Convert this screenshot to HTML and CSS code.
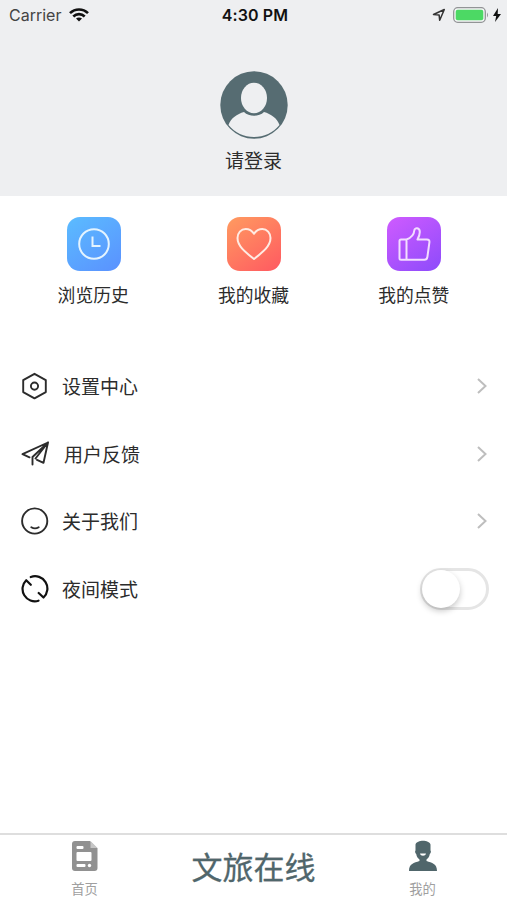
FILE: index.html
```html
<!DOCTYPE html>
<html lang="zh-CN">

<head>
  <meta charset="utf-8" />
  <title>我的</title>
  <link rel="stylesheet" href="styles.css">
</head>

<body>
  <div class="header">
    <div class="status">
      <div class="status-left">
        <span class="carrier">Carrier</span>
        <svg width="20" height="14" viewBox="0 0 20 14" fill="none" stroke="#111" stroke-width="2.6">
          <path d="M1 5.2C6 .2 14 .2 19 5.2" />
          <path d="M4.3 8.5c3.2-3.2 8.2-3.2 11.4 0" />
          <path d="M7 10.500c1.700-1.500 4.300-1.500 6 0l-3 3z" fill="#111" stroke="none" />
        </svg>
      </div>
      <span class="time">4:30 PM</span>
      <div class="status-right">
        <svg width="14" height="14" viewBox="0 0 14 14" fill="none" stroke="#333" stroke-width="1.5" stroke-linejoin="round">
          <path d="M1.500 6.500l10.800-5-4.600 10.800-.6-5.400z" />
        </svg>
        <svg width="37" height="16" viewBox="0 0 37 16">
          <rect x=".7" y=".7" width="31.600" height="14.600" rx="4" fill="#f4f5f6" stroke="#929496" stroke-width="1.3" />
          <rect x="2.700" y="2.700" width="27.600" height="10.600" rx="2" fill="#4cd964" />
          <path d="M34 5.500q2 2.500 0 5z" fill="#929496" />
        </svg>
        <svg class="bolt" width="8" height="14" viewBox="0 0 8 14">
          <path d="M5 0L0 8h3.200L2 14l6-8H4.700z" fill="#111" />
        </svg>
      </div>
    </div>
    <div class="user">
      <svg width="68" height="68" viewBox="0 0 68 68">
        <circle cx="34" cy="34" r="33.700" fill="#566c72" />
        <path d="M8.500 54C11 47 17 43 24 41c5 5 15 5 20 0 7 2 13 6 15.500 13C53 62 44 66 34 66S15 62 8.500 54z" fill="#eeeff1" />
        <ellipse cx="34" cy="27" rx="13" ry="15.200" fill="#eeeff1" />
      </svg>
      <span class="login">请登录</span>
    </div>
  </div>

  <div class="nav">
    <div class="nav-item">
      <div class="nav-icon history">
        <svg width="54" height="54" viewBox="0 0 54 54" fill="none" stroke="#e4f4ff" stroke-width="2">
          <circle cx="27" cy="27" r="14.800" />
          <path d="M25.500 19.500v9.500h8" />
        </svg>
      </div>
      <span>浏览历史</span>
    </div>
    <div class="nav-item">
      <div class="nav-icon collect">
        <svg width="54" height="54" viewBox="0 0 54 54" fill="none" stroke="#ffebe3" stroke-width="2" stroke-linejoin="round">
          <path d="M27 42C18 35 10.500 29 10.500 21c0-5 3.500-9 8.200-9 3.800 0 6.800 2.500 8.300 4.800 1.500-2.300 4.500-4.800 8.300-4.800 4.700 0 8.200 4 8.200 9C43.500 29 36 35 27 42z" />
        </svg>
      </div>
      <span>我的收藏</span>
    </div>
    <div class="nav-item">
      <div class="nav-icon like">
        <svg width="54" height="54" viewBox="0 0 54 54" fill="none" stroke="#f3ddff" stroke-width="2" stroke-linejoin="round">
          <path d="M14 22.500h5.500c4-1.500 7.500-5 7.800-9 .2-3.300 5.500-3 5.500 1.500 0 3-1.300 5.500-2.300 7.500h9.500c1.800 0 2.700 1 2.400 2.800l-2 14.500c-.3 2-1.300 3-3 3H14c-1 0-1.500-.5-1.500-1.500V24c0-1 .5-1.500 1.500-1.500zM19.500 22.500v20.300" />
        </svg>
      </div>
      <span>我的点赞</span>
    </div>
  </div>

  <div class="list">
    <div class="list-item">
      <svg class="icon" width="28" height="28" viewBox="0 0 28 28">
        <path d="M13.500 1.800l11.300 6.300v12L13.500 26.400 2.200 20.100v-12z" />
        <circle cx="13.500" cy="14.100" r="3.600" />
      </svg>
      <span class="text">设置中心</span>
      <svg class="arrow" width="12" height="18" viewBox="0 0 12 18"><path d="M2 2l7.500 7L2 16" /></svg>
    </div>
    <div class="list-item feedback">
      <svg class="icon" width="28" height="28" viewBox="0 0 28 28">
        <path d="M8.500 17.300L1.500 14.200 27 2.500l-4.500 20.300-6.500-3M27 2.500L11.500 17v7.500M27 2.500L14.500 18.500" />
      </svg>
      <span class="text">用户反馈</span>
      <svg class="arrow" width="12" height="18" viewBox="0 0 12 18"><path d="M2 2l7.500 7L2 16" /></svg>
    </div>
    <div class="list-item">
      <svg class="icon" width="28" height="28" viewBox="0 0 28 28">
        <circle cx="13.700" cy="14" r="12.600" />
        <path d="M10.300 20.200c2 1.300 5.400 1.300 7.400 0" />
      </svg>
      <span class="text">关于我们</span>
      <svg class="arrow" width="12" height="18" viewBox="0 0 12 18"><path d="M2 2l7.500 7L2 16" /></svg>
    </div>
    <div class="list-item">
      <svg class="icon night" width="28" height="28" viewBox="0 0 28 28">
        <path d="M9.800 2A12.300 12.300 0 0 1 22.500 22.500l-4.800-4.500M17.500 25.700A12.300 12.300 0 0 1 5.200 5.200l4.600 4.600" />
      </svg>
      <span class="text">夜间模式</span>
      <div class="switch"><div class="switch-dot"></div></div>
    </div>
  </div>

  <div class="tabbar">
    <div class="tab">
      <svg width="28" height="32" viewBox="0 0 28 32">
        <path d="M4 1h15l7.500 7.500V28c0 2-1 3-3 3H4c-2 0-3-1-3-3V4c0-2 1-3 3-3z" fill="#919191" />
        <path d="M19.500 1v7h7z" fill="#c6c6c6" />
        <rect x="5.500" y="6" width="7" height="3" rx="1" fill="#fff" />
        <rect x="5.500" y="12" width="15" height="9" rx="1" fill="#fff" />
        <rect x="5.500" y="24" width="9" height="3" rx="1" fill="#fff" />
        <circle cx="18.500" cy="25.500" r="1.700" fill="#fff" />
      </svg>
      <span>首页</span>
    </div>
    <div class="brand">文旅在线</div>
    <div class="tab">
      <svg width="28" height="32" viewBox="0 0 28 32">
        <path d="M6.500 4.500C8-.5 20-.5 21.500 4.500v6c.8.600.3 3-.7 3.500-.5 2.800-1.800 4.500-3.300 5.500v1.500C23 23 28 23.500 28 31H0c0-7.500 5-8 10.500-10v-1.500C9 18.500 7.700 16.800 7.200 14c-1-.5-1.500-2.900-.7-3.500z" fill="#50666b" />
        <path d="M11 13.500h6c-.5 3-5.500 3-6 0z" fill="#fff" />
      </svg>
      <span>我的</span>
    </div>
  </div>
</body>

</html>
```
FILE: styles.css
```css
body {
  display: flex;
  flex-direction: column;
  height: 900px;
  margin: 0;
  background-color: #fff;
  color: #2c2c2c;
  font-family: "Liberation Sans", "Noto Sans CJK SC", sans-serif;
}

svg {
  display: block;
  flex: none;
}

.header {
  height: 196px;
  background-color: #eeeff1;
}

.status {
  display: grid;
  grid-template-columns: 1fr auto 1fr;
  align-items: center;
  height: 30px;
  padding: 0 6px 0 9px;
  font-family: Inter, sans-serif;
  font-size: 16px;
}

.status-left {
  display: flex;
  align-items: center;
  gap: 8px;
}

.carrier {
  color: #444;
}

.time {
  color: #111;
  font-weight: 600;
  letter-spacing: 0.1px;
}

.status-right {
  display: flex;
  align-items: center;
  justify-content: flex-end;
  gap: 7px;
}

.bolt {
  margin-left: -4px;
}

.user {
  display: flex;
  flex-direction: column;
  align-items: center;
  padding-top: 41px;
}

.login {
  margin-top: 9px;
  font-size: 19px;
  line-height: 28px;
}

.nav {
  display: grid;
  grid-template-columns: repeat(3, 1fr);
  box-sizing: border-box;
  height: 156.5px;
  padding: 21px 13px 0;
}

.nav-item {
  display: flex;
  flex-direction: column;
  align-items: center;
  font-size: 17.8px;
  line-height: 26px;
}

.nav-icon {
  width: 54px;
  height: 54px;
  margin-bottom: 12px;
  margin-left: 1px;
  border-radius: 13px;
}

.history {
  background: linear-gradient(145deg, #5bbcff, #5a91ff);
}

.collect {
  background: linear-gradient(145deg, #ff9b60, #ff5961);
}

.like {
  background: linear-gradient(145deg, #cf5bff, #8d4bfb);
}

.list-item {
  display: flex;
  align-items: center;
  height: 67.5px;
  padding: 0 18px 0 21px;
}

.icon {
  fill: none;
  stroke: #2c2c2c;
  stroke-width: 1.9;
  stroke-linejoin: round;
  stroke-linecap: round;
}

.night {
  stroke: #111;
  stroke-width: 2.2;
}

.text {
  flex: 1;
  margin-left: 13px;
  padding-bottom: 1px;
  font-size: 19px;
}

.feedback .text {
  margin-left: 15px;
}

.arrow {
  margin-right: 1px;
  fill: none;
  stroke: #bebebe;
  stroke-width: 2;
}

.switch {
  box-sizing: border-box;
  width: 69px;
  height: 42px;
  border: 3px solid #e5e5e5;
  border-radius: 21px;
}

.switch-dot {
  width: 38px;
  height: 38px;
  margin: -1px;
  border-radius: 50%;
  background-color: #fff;
  box-shadow: 0 3px 6px rgba(0, 0, 0, 0.22);
}

.tabbar {
  display: grid;
  grid-template-columns: 1fr 1fr 1fr;
  box-sizing: border-box;
  height: 67px;
  margin-top: auto;
  border-top: 2px solid #dedede;
}

.tab {
  display: flex;
  flex-direction: column;
  align-items: center;
  padding-top: 5px;
  color: #a0a0a0;
  font-size: 13.3px;
  line-height: 20px;
}

.tab span {
  margin-top: 8px;
}

.brand {
  padding-top: 2px;
  color: #50666b;
  font-size: 31px;
  line-height: 64px;
  text-align: center;
  -webkit-text-stroke: 0.3px #50666b;
}
```
